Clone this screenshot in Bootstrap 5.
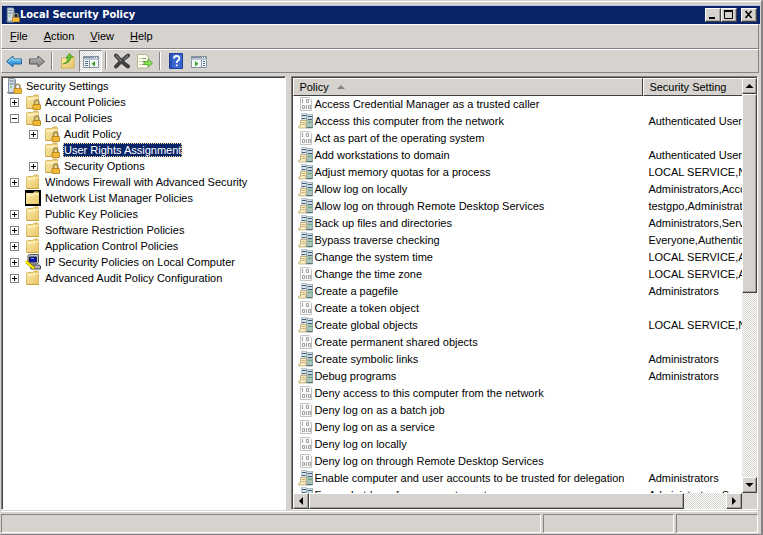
<!DOCTYPE html>
<html lang="en">
<head>
<meta charset="utf-8">
<meta name="viewport" content="width=device-width, initial-scale=1">
<title>Local Security Policy</title>
<link href="https://cdn.jsdelivr.net/npm/bootstrap@5.3.0/dist/css/bootstrap.min.css" rel="stylesheet">
<style>
:root { --face:#d6d3ce; --shade:#848284; --dark:#424142; --navy:#0a246a; }
body { font-family:"Liberation Sans",Arial,sans-serif; font-size:11px; line-height:16px; color:#000; background:var(--face); }
button { font:inherit; color:#000; background:none; border:0; padding:0; border-radius:0; flex-shrink:0; }
svg { display:block; flex-shrink:0; }
.frame { border:solid; border-width:1px 2px 1px 1px; border-color:var(--face) var(--shade) var(--shade) var(--face); box-shadow:inset 0 1px #fff; padding:4px 1px 1px 0; }
.titlebar { height:19px; background:var(--navy); color:#fff; padding:0 3px; margin-left:1px; border-top:1px solid #b5c3e0; }
.titlebar h1 { font:bold 11px/16px "DejaVu Sans Condensed","DejaVu Sans",sans-serif; }
.raised { background:var(--face); border:1px solid; border-color:#fff var(--dark) var(--dark) #fff; box-shadow:inset -1px -1px #a5a29c; }
.wbtn { width:16px; height:14px; }
.menubar, .toolbar { border:1px solid; border-color:#fff var(--shade) var(--shade) #fff; margin-right:1px; }
.menubar { height:26px; }
.menubar button { padding:0 8px; }
.toolbar { height:24px; }
.tool { width:23px; height:22px; }
.tool.active { border:1px solid; border-color:var(--shade) #fff #fff var(--shade); background:repeating-conic-gradient(#fff 0 25%, #dedbd6 0 50%) 0 0/2px 2px; }
.sep { width:8px; height:18px; flex-shrink:0; }
.sep::after { content:""; display:block; width:2px; height:18px; margin-left:3px; border-left:1px solid var(--shade); border-right:1px solid #fff; }
.panes { padding-top:3px; gap:5px; min-height:0; }
.sunken { background:#fff; border:1px solid; border-color:var(--shade) #fff #fff var(--shade); box-shadow:inset 1px 1px var(--dark); }
.treepane { flex:278 1 0; padding:1px 1px 1px 4px; overflow:hidden; }
.listpane { flex:463 1 0; min-width:0; padding:1px 0 0 1px; margin-right:2px; }
.treepane ul { list-style:none; margin:0; padding:0; }
.treepane ul ul { padding-left:1px; }
.treepane ul ul ul { padding-left:19px; }
.node { height:16px; gap:3px; white-space:nowrap; }
.node span { padding:0 1px; line-height:14px; }
.node .chosen { background:var(--navy); color:#fff; outline:1px dotted #f5db95; outline-offset:-1px; }
.twig { width:9px; height:9px; border:1px solid var(--shade); background:linear-gradient(#000,#000) center/5px 1px no-repeat; margin:0 3px; flex-shrink:0; }
.twig.plus { background:linear-gradient(#000,#000) center/5px 1px no-repeat, linear-gradient(#000,#000) center/1px 5px no-repeat; }
.twig.none { visibility:hidden; }
.grid { table-layout:fixed; width:100%; border-collapse:separate; border-spacing:0; }
.grid th { height:18px; line-height:14px; font-weight:400; padding:0 5px; background:var(--face); border:1px solid; border-color:#fff var(--dark) var(--dark) #fff; }
.grid .c1 { width:350px; }
.grid td { height:17px; line-height:17px; padding:0 0 0 5px; white-space:nowrap; overflow:hidden; }
.grid td svg { display:inline-block; vertical-align:top; }
.sort { border:4px solid transparent; border-top:0; border-bottom:4px solid var(--shade); }
.track { background:repeating-conic-gradient(#fff 0 25%, var(--face) 0 50%) 0 0/2px 2px; }
.vbar { width:15px; }
.corner { background:var(--face); }
.hbar { height:16px; }
.hbar .sbtn { width:16px; height:16px; }
.vbar .sbtn { width:15px; height:16px; }
.vthumb { height:52%; }
.hthumb { width:90%; }
.statusbar { height:22px; padding-top:2px; gap:2px; margin:1px 2px 0 0; border-top:1px solid #fff; }
.statusbar div { border:1px solid; border-color:var(--shade) #fff #fff var(--shade); }
.s1 { flex:542; } .s2 { flex:130; } .s3 { flex:81; }
</style>
<script src="https://cdn.jsdelivr.net/npm/bootstrap@5.3.0/dist/js/bootstrap.bundle.min.js"></script>
</head>
<body>
<svg width="0" height="0" class="position-absolute" aria-hidden="true">
<defs>
<linearGradient id="gold" x1="0" y1="0" x2="1" y2="1"><stop offset="0" stop-color="#fdedab"/><stop offset="1" stop-color="#e8c568"/></linearGradient>
<linearGradient id="sky" x1="0" y1="0" x2="0" y2="1"><stop offset="0" stop-color="#7fd0fa"/><stop offset="1" stop-color="#1680d0"/></linearGradient>
</defs>
<symbol id="lock" viewBox="0 0 16 16"><path d="M9.500 11V8.500a2.200 2.200 0 0 1 4.400 0V11" fill="none" stroke="#9a8a55" stroke-width="1.500"/><rect x="8" y="10.500" width="7.500" height="5" rx=".5" fill="#e8a91c" stroke="#a8740c" stroke-width=".7"/><path d="M8.500 12h6.500M8.500 14h6.500" stroke="#ffd968" stroke-width=".7"/></symbol>
<symbol id="folder" viewBox="0 0 16 16"><path d="M1.500 3.500q0-1 1-1H8L9 1h4l.5 2V14.500h-12z" fill="url(#gold)" stroke="#d9b962"/><path d="M2 5h7l1.500-1.500H13.500" fill="none" stroke="#fff8d8"/><path d="M10 2h2.500" stroke="#c6a24c"/><path d="M2 14.500h12" stroke="#c9a040"/></symbol>
<symbol id="folderlock" viewBox="0 0 16 16"><use href="#folder"/><use href="#lock"/></symbol>
<symbol id="folderdark" viewBox="0 0 16 16"><path d="M0 0h16v16H0z" fill="#000"/><path d="M1 3h7l1.500-1.500H13L14 3v11H1z" fill="url(#gold)"/><path d="M1.500 5h7.500l1-1h3.500" fill="none" stroke="#fff8d8"/><path d="M10 2.500h2.500" stroke="#c6a24c"/></symbol>
<symbol id="server" viewBox="0 0 16 16"><path d="M2.500.5h6l1 1v14h-7z" fill="#d5dee5" stroke="#8796a3"/><path d="M8.500 1.500v13" stroke="#a2afb9"/><path d="M3.500 3h4M3.500 6h4" stroke="#5a7387"/><path d="M4 9h2" stroke="#52ad43"/><path d="M1 14.500h7" stroke="#78868f"/><use href="#lock"/></symbol>
<symbol id="ipsec" viewBox="0 0 16 16"><path d="M3 1.500L5 .5h8.500v8l-1.500 1.500H3z" fill="#c4c4cc" stroke="#555"/><path d="M4.500 3h7v5h-7z" fill="#0712b8" stroke="#223"/><path d="M5 11h9l1.500 1v3H6z" fill="#b2b2ba" stroke="#444"/><path d="M6 4.500h3" stroke="#4aa0ff"/><path d="M1.500 8l8 6.500" stroke="#7e7800" stroke-width="3"/><path d="M.5 7l2 2 6.500 5.500" fill="none" stroke="#fff200" stroke-width="2"/></symbol>
<symbol id="defined" viewBox="0 0 16 16"><path d="M3.500.5h5v11h-5z" fill="#dde4ea" stroke="#a8b4bf" stroke-width=".8"/><path d="M9 1.500h5.500v13.500H8z" fill="#a9c2b7" stroke="#7f9799" stroke-width=".8"/><path d="M9.500 1.500h4.500v5h-4.500z" fill="#cddae4"/><path d="M4 2.500h4M4 5.500h3.500M10 3.500h4M10 6.500h4" stroke="#3d5d79" stroke-width="1.100"/><path d="M10 9.500h4" stroke="#65ac78"/><path d="M9 14.500h5.500" stroke="#55756b"/><path d="M2.500 7.500h6l-.8 7.500H1q-1-.6 0-2h1.500z" fill="#f9edc6" stroke="#baa56d" stroke-width=".8"/><path d="M3.500 9.500h3.500M3.500 11.500h3.500" stroke="#ba9f61" stroke-width=".8"/></symbol>
<symbol id="undefined" viewBox="0 0 16 16"><path d="M2.500 1.500h9l2 2v11h-11z" fill="#fafafa" stroke="#c3c3c3"/><path d="M4.500 3v4M8.500 3.500h2v3h-2zM4.500 9.500h2v3h-2zM8.500 9v4M10.500 9.500h2v3h-2z" fill="none" stroke="#a0a0a0"/></symbol>
<symbol id="back" viewBox="0 0 16 16"><path d="M.5 8.500L7 3v3h8.500v5H7v3z" fill="url(#sky)" stroke="#236999"/><path d="M2.500 8.300L6.300 5v2h8.200" fill="none" stroke="#b9eaff" stroke-width=".8"/></symbol>
<symbol id="forward" viewBox="0 0 16 16"><path d="M15.500 8.500L9 3v3H.5v5H9v3z" fill="#969696" stroke="#555"/><path d="M1.500 7H10V5l3.700 3.300" fill="none" stroke="#c9c9c9" stroke-width=".8"/></symbol>
<symbol id="upfolder" viewBox="0 0 16 16"><path d="M1.500 5h6l1-1.500H14V15H1.500z" fill="url(#gold)" stroke="#d3af55"/><path d="M3 11q4.500-1 5-6.500L6 5l3.500-4.500L13 4.500l-2.200-.1Q10.500 10 3 11z" fill="#62c42c" stroke="#36891a" stroke-width=".7"/></symbol>
<symbol id="panel" viewBox="0 0 16 16"><path d="M.5 3.500h15v11H.5z" fill="#f6f7f9" stroke="#8593a2"/><path d="M0 4.500h16" stroke="#7e90a4" stroke-width="2"/><path d="M11 4.500h1M13 4.500h1" stroke="#fff"/><path d="M0 6.500h16" stroke="#bbc5cf"/></symbol>
<symbol id="showtree" viewBox="0 0 16 16"><use href="#panel"/><path d="M6.500 7v7.500" stroke="#8593a2"/><path d="M2 8.500h3M2 10.500h3M2 12.500h3" stroke="#4e6c8b"/><path d="M12 8v5.500L8.500 10.800z" fill="#35a629"/></symbol>
<symbol id="showaction" viewBox="0 0 16 16"><use href="#panel"/><path d="M10.500 7v7.500" stroke="#8593a2"/><path d="M12 8.500h2M12 10.500h2M12 12.500h2" stroke="#4e6c8b"/><path d="M4 8v5.500l3.500-2.700z" fill="#35a629"/></symbol>
<symbol id="delete" viewBox="0 0 16 16"><path d="M2 2.500Q7 9 14 13.500M14 2.500Q8 7 2 13.500" fill="none" stroke="#3f3f3f" stroke-width="4" stroke-linecap="round"/><path d="M2 2.500L7.500 8M14 2.500L9.500 6.500" stroke="#7d7d7d" stroke-width="1.200"/></symbol>
<symbol id="export" viewBox="0 0 16 16"><path d="M.5 1.500h8L11.500 4v11H.5z" fill="#fffff0" stroke="#b8b490"/><path d="M2.500 5.500h1M5 5.500h4M2.500 8.500h1M5 8.500h3M2.500 11.500h1M5 11.500h3" stroke="#7d8f66"/><path d="M7 8.500h4V6l4.500 4-4.500 4v-2.500H7z" fill="#8bdd52" stroke="#4da529" stroke-width=".9"/></symbol>
<symbol id="help" viewBox="0 0 16 16"><path d="M1.500.5h13v15h-13z" fill="#3866cd" stroke="#1d3f99"/><path d="M3 1v14" stroke="#183b9c"/><path d="M6 5.500q0-2.500 2.700-2.500T11.300 5.500q0 1.300-1.500 2.200-1.100.7-1.100 2.300M8.700 11.500v1.800" fill="none" stroke="#fff" stroke-width="1.800"/></symbol>
</svg>
<div class="frame d-flex flex-column vh-100">
  <header class="titlebar d-flex align-items-center">
    <svg width="15" height="16"><use href="#server"/></svg>
    <h1 class="m-0 flex-grow-1">Local Security Policy</h1>
    <button class="raised wbtn" aria-label="Minimize"><svg width="13" height="11"><path d="M3 9h6" stroke="#000" stroke-width="2"/></svg></button>
    <button class="raised wbtn" aria-label="Maximize"><svg width="13" height="11"><path d="M2.500 2v7.500h8V2" fill="none" stroke="#000"/><path d="M2 2h9" stroke="#000" stroke-width="2"/></svg></button>
    <button class="raised wbtn ms-1" aria-label="Close"><svg width="13" height="11"><path d="M3.500 2l6 7M9.500 2l-6 7" stroke="#000" stroke-width="1.600"/></svg></button>
  </header>
  <nav class="menubar d-flex align-items-center" aria-label="Menu">
    <button><u>F</u>ile</button><button><u>A</u>ction</button><button><u>V</u>iew</button><button><u>H</u>elp</button>
  </nav>
  <div class="toolbar d-flex align-items-center" role="toolbar" aria-label="Tools">
    <button class="tool d-flex align-items-center justify-content-center" aria-label="Back"><svg width="16" height="16"><use href="#back"/></svg></button>
    <button class="tool d-flex align-items-center justify-content-center" aria-label="Forward"><svg width="16" height="16"><use href="#forward"/></svg></button>
    <span class="sep"></span>
    <button class="tool d-flex align-items-center justify-content-center" aria-label="Up one level"><svg width="16" height="16"><use href="#upfolder"/></svg></button>
    <button class="tool active d-flex align-items-center justify-content-center" aria-label="Show console tree" aria-pressed="true"><svg width="16" height="16"><use href="#showtree"/></svg></button>
    <span class="sep"></span>
    <button class="tool d-flex align-items-center justify-content-center" aria-label="Delete"><svg width="16" height="16"><use href="#delete"/></svg></button>
    <button class="tool d-flex align-items-center justify-content-center" aria-label="Export list"><svg width="16" height="16"><use href="#export"/></svg></button>
    <span class="sep"></span>
    <button class="tool d-flex align-items-center justify-content-center" aria-label="Help"><svg width="16" height="16"><use href="#help"/></svg></button>
    <button class="tool d-flex align-items-center justify-content-center" aria-label="Show action pane"><svg width="16" height="16"><use href="#showaction"/></svg></button>
  </div>
  <main class="panes d-flex flex-grow-1">
    <section class="sunken treepane" aria-label="Console tree">
      <ul>
        <li><div class="node d-flex align-items-center"><svg width="16" height="16"><use href="#server"/></svg><span>Security Settings</span></div>
          <ul>
            <li><div class="node d-flex align-items-center"><button class="twig plus" aria-label="Expand"></button><svg width="16" height="16"><use href="#folderlock"/></svg><span>Account Policies</span></div></li>
            <li><div class="node d-flex align-items-center"><button class="twig" aria-label="Collapse"></button><svg width="16" height="16"><use href="#folderlock"/></svg><span>Local Policies</span></div>
              <ul>
                <li><div class="node d-flex align-items-center"><button class="twig plus" aria-label="Expand"></button><svg width="16" height="16"><use href="#folderlock"/></svg><span>Audit Policy</span></div></li>
                <li><div class="node d-flex align-items-center"><i class="twig none"></i><svg width="16" height="16"><use href="#folderlock"/></svg><span class="chosen">User Rights Assignment</span></div></li>
                <li><div class="node d-flex align-items-center"><button class="twig plus" aria-label="Expand"></button><svg width="16" height="16"><use href="#folderlock"/></svg><span>Security Options</span></div></li>
              </ul></li>
            <li><div class="node d-flex align-items-center"><button class="twig plus" aria-label="Expand"></button><svg width="16" height="16"><use href="#folder"/></svg><span>Windows Firewall with Advanced Security</span></div></li>
            <li><div class="node d-flex align-items-center"><i class="twig none"></i><svg width="16" height="16"><use href="#folderdark"/></svg><span>Network List Manager Policies</span></div></li>
            <li><div class="node d-flex align-items-center"><button class="twig plus" aria-label="Expand"></button><svg width="16" height="16"><use href="#folder"/></svg><span>Public Key Policies</span></div></li>
            <li><div class="node d-flex align-items-center"><button class="twig plus" aria-label="Expand"></button><svg width="16" height="16"><use href="#folder"/></svg><span>Software Restriction Policies</span></div></li>
            <li><div class="node d-flex align-items-center"><button class="twig plus" aria-label="Expand"></button><svg width="16" height="16"><use href="#folder"/></svg><span>Application Control Policies</span></div></li>
            <li><div class="node d-flex align-items-center"><button class="twig plus" aria-label="Expand"></button><svg width="16" height="16"><use href="#ipsec"/></svg><span>IP Security Policies on Local Computer</span></div></li>
            <li><div class="node d-flex align-items-center"><button class="twig plus" aria-label="Expand"></button><svg width="16" height="16"><use href="#folder"/></svg><span>Advanced Audit Policy Configuration</span></div></li>
          </ul></li>
      </ul>
    </section>
    <section class="sunken listpane d-flex flex-column" aria-label="Policies">
      <div class="d-flex flex-grow-1 overflow-hidden">
        <div class="flex-grow-1 overflow-hidden">
          <table class="grid">
            <thead><tr><th class="c1" scope="col"><button class="d-flex align-items-center gap-2">Policy <i class="sort"></i></button></th><th scope="col" class="border-end-0">Security Setting</th></tr></thead>
            <tbody>
<tr><td><svg width="16" height="16"><use href="#undefined"/></svg>Access Credential Manager as a trusted caller</td><td></td></tr>
<tr><td><svg width="16" height="16"><use href="#defined"/></svg>Access this computer from the network</td><td>Authenticated Users,Administrators</td></tr>
<tr><td><svg width="16" height="16"><use href="#undefined"/></svg>Act as part of the operating system</td><td></td></tr>
<tr><td><svg width="16" height="16"><use href="#defined"/></svg>Add workstations to domain</td><td>Authenticated Users</td></tr>
<tr><td><svg width="16" height="16"><use href="#defined"/></svg>Adjust memory quotas for a process</td><td>LOCAL SERVICE,NETWORK SERVICE</td></tr>
<tr><td><svg width="16" height="16"><use href="#defined"/></svg>Allow log on locally</td><td>Administrators,Account Operators</td></tr>
<tr><td><svg width="16" height="16"><use href="#defined"/></svg>Allow log on through Remote Desktop Services</td><td>testgpo,Administrators</td></tr>
<tr><td><svg width="16" height="16"><use href="#defined"/></svg>Back up files and directories</td><td>Administrators,Server Operators</td></tr>
<tr><td><svg width="16" height="16"><use href="#defined"/></svg>Bypass traverse checking</td><td>Everyone,Authenticated Users</td></tr>
<tr><td><svg width="16" height="16"><use href="#defined"/></svg>Change the system time</td><td>LOCAL SERVICE,Administrators</td></tr>
<tr><td><svg width="16" height="16"><use href="#undefined"/></svg>Change the time zone</td><td>LOCAL SERVICE,Administrators</td></tr>
<tr><td><svg width="16" height="16"><use href="#defined"/></svg>Create a pagefile</td><td>Administrators</td></tr>
<tr><td><svg width="16" height="16"><use href="#undefined"/></svg>Create a token object</td><td></td></tr>
<tr><td><svg width="16" height="16"><use href="#defined"/></svg>Create global objects</td><td>LOCAL SERVICE,NETWORK SERVICE</td></tr>
<tr><td><svg width="16" height="16"><use href="#undefined"/></svg>Create permanent shared objects</td><td></td></tr>
<tr><td><svg width="16" height="16"><use href="#defined"/></svg>Create symbolic links</td><td>Administrators</td></tr>
<tr><td><svg width="16" height="16"><use href="#defined"/></svg>Debug programs</td><td>Administrators</td></tr>
<tr><td><svg width="16" height="16"><use href="#undefined"/></svg>Deny access to this computer from the network</td><td></td></tr>
<tr><td><svg width="16" height="16"><use href="#undefined"/></svg>Deny log on as a batch job</td><td></td></tr>
<tr><td><svg width="16" height="16"><use href="#undefined"/></svg>Deny log on as a service</td><td></td></tr>
<tr><td><svg width="16" height="16"><use href="#undefined"/></svg>Deny log on locally</td><td></td></tr>
<tr><td><svg width="16" height="16"><use href="#undefined"/></svg>Deny log on through Remote Desktop Services</td><td></td></tr>
<tr><td><svg width="16" height="16"><use href="#defined"/></svg>Enable computer and user accounts to be trusted for delegation</td><td>Administrators</td></tr>
<tr><td><svg width="16" height="16"><use href="#defined"/></svg>Force shutdown from a remote system</td><td>Administrators,Server Operators</td></tr>
            </tbody>
          </table>
        </div>
        <div class="vbar track d-flex flex-column flex-shrink-0">
          <button class="raised sbtn" aria-label="Scroll up"><svg width="13" height="14"><path d="M2.500 9h8l-4-4z"/></svg></button>
          <div class="flex-grow-1"><div class="raised vthumb"></div></div>
          <button class="raised sbtn" aria-label="Scroll down"><svg width="13" height="14"><path d="M2.500 5h8l-4 4z"/></svg></button>
        </div>
      </div>
      <div class="d-flex flex-shrink-0">
        <div class="hbar track d-flex flex-grow-1">
          <button class="raised sbtn" aria-label="Scroll left"><svg width="14" height="14"><path d="M9 3v8L5 7z"/></svg></button>
          <div class="flex-grow-1"><div class="raised hthumb h-100"></div></div>
          <button class="raised sbtn" aria-label="Scroll right"><svg width="14" height="14"><path d="M5 3v8l4-4z"/></svg></button>
        </div>
        <div class="vbar corner flex-shrink-0"></div>
      </div>
    </section>
  </main>
  <footer class="statusbar d-flex"><div class="s1"></div><div class="s2"></div><div class="s3"></div></footer>
</div>
</body>
</html>
